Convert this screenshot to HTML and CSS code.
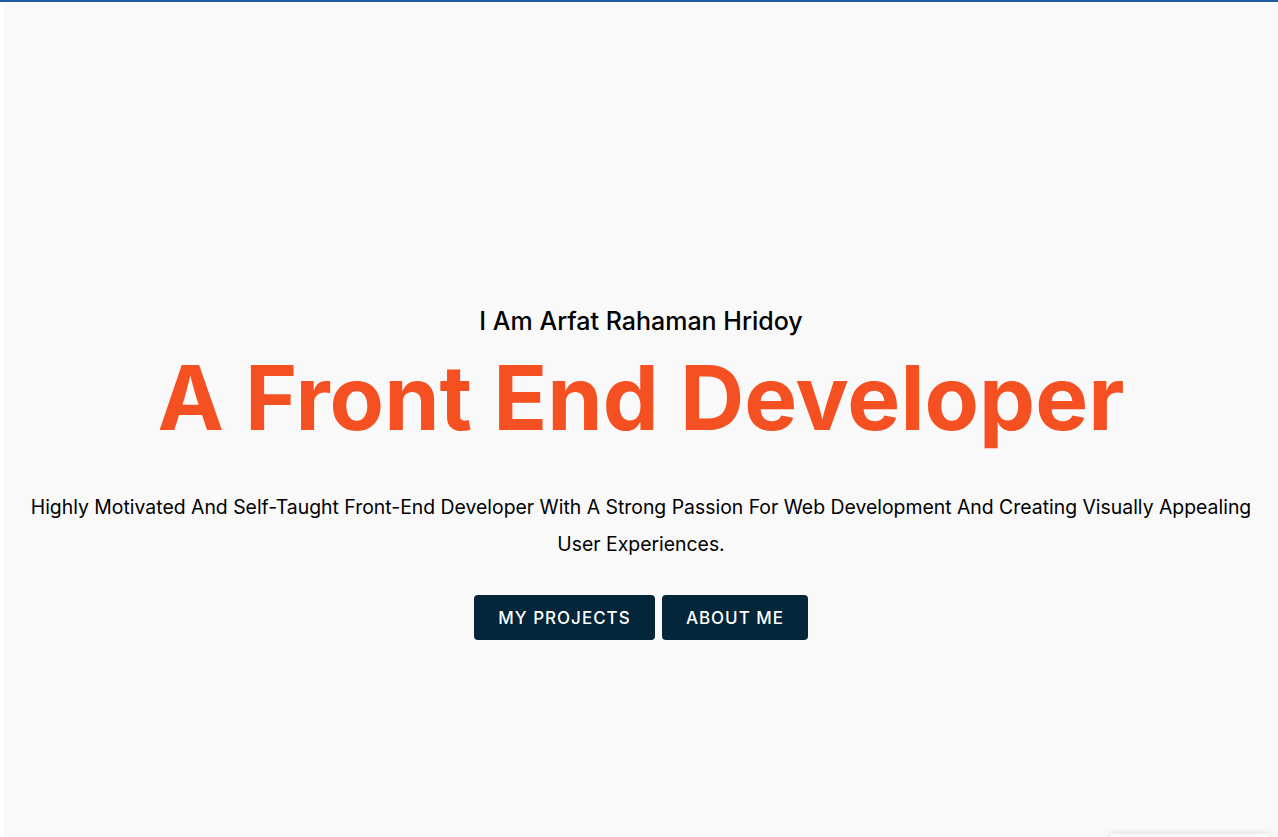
FILE: index.html
```html
<!DOCTYPE html>
<html lang="en">
<head>
<meta charset="utf-8">
<title>Arfat Rahaman Hridoy</title>
<link rel="stylesheet" href="styles.css">
</head>
<body>
<div class="topline"></div>
<div class="page">
  <div class="gutter"></div>
  <main class="hero">
    <h3 class="intro">I Am Arfat Rahaman Hridoy</h3>
    <h1 class="title">A Front End Developer</h1>
    <p class="lead">Highly Motivated And Self-Taught Front-End Developer With A Strong Passion For Web Development And Creating Visually Appealing User Experiences.</p>
    <div class="actions">
      <a class="btn btn-projects" href="#">MY PROJECTS</a>
      <a class="btn btn-about" href="#">ABOUT ME</a>
    </div>
  </main>
</div>
<div class="peek"></div>
</body>
</html>
```

FILE: styles.css
```css
html, body {
  margin: 0;
  padding: 0;
  height: 100%;
  overflow: hidden;
}
body {
  background: #f9f9f9;
  font-family: "Inter", "Noto Sans", sans-serif;
  color: #000;
}
.topline {
  height: 2px;
  background: #1f5aa0;
}
.page {
  display: flex;
  height: 835px;
}
.gutter {
  width: 4px;
  background: #ffffff;
  flex: none;
}
.hero {
  flex: 1;
  display: flex;
  flex-direction: column;
  align-items: center;
  padding-top: 300px;
}
.intro {
  margin: 0;
  font-size: 25px;
  font-weight: 500;
  line-height: 38px;
}
.title {
  margin: 8px 0 0;
  font-size: 89px;
  font-weight: 700;
  color: #f55022;
  line-height: 100px;
}
.lead {
  margin: 41px 0 0;
  padding: 0 20px;
  font-size: 19.4px;
  line-height: 37px;
  text-align: center;
}
.actions {
  display: flex;
  gap: 7px;
  margin-top: 32px;
}
.btn {
  display: flex;
  align-items: center;
  justify-content: center;
  height: 45px;
  background: #03263a;
  color: #ffffff;
  text-decoration: none;
  font-size: 17px;
  font-weight: 500;
  letter-spacing: 1px;
  border-radius: 4px;
}
.btn-projects { width: 181px; }
.btn-about { width: 146px; }
.peek {
  position: absolute;
  left: 1110px;
  top: 834px;
  width: 160px;
  height: 20px;
  background: #f9f9f9;
  box-shadow: 0 0 8px rgba(0,0,0,0.12);
}
```
